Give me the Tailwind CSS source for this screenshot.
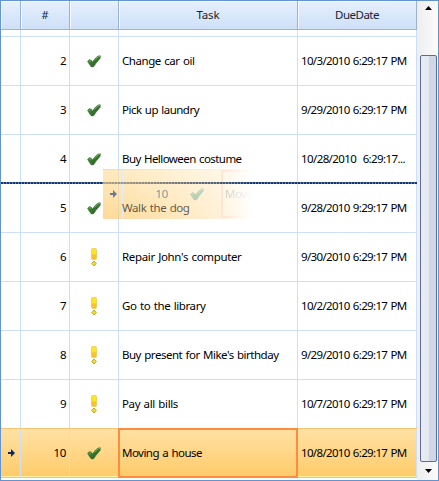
<!DOCTYPE html>
<html lang="en">
<head>
<meta charset="utf-8">
<title>Tasks</title>
<script src="https://cdn.jsdelivr.net/npm/@tailwindcss/browser@4"></script>
</head>
<body class="bg-white">
<svg class="absolute h-0 w-0">
  <defs>
    <linearGradient id="green" x1="0" y1="0" x2="1" y2="1"><stop offset="0" stop-color="#4fa040"/><stop offset=".5" stop-color="#38752f"/><stop offset="1" stop-color="#27562a"/></linearGradient>
    <linearGradient id="yellow" x1="0" y1="0" x2="0" y2="1"><stop offset="0" stop-color="#ffe51f"/><stop offset=".45" stop-color="#ffe51f"/><stop offset=".6" stop-color="#fbc12c"/><stop offset="1" stop-color="#fbc12c"/></linearGradient>
    <symbol id="check" viewBox="0 0 14 13"><path d="M.6 6.2 2.4 4.6 4.3 5.2 5.4 7.1 8.6 3 11.3 1 13.3.8 13.2 3.2 9 8.3 6.6 11.8 4.3 11.9 2.3 9.3Z" fill="url(#green)" stroke="#346a2f" stroke-width=".6"/><path d="M2 5.8 4 6.2M7.8 5 11.2 1.9 13 1.4" stroke="#63b64c" stroke-width="1" fill="none"/></symbol>
    <symbol id="bang" viewBox="0 0 6 19"><rect x=".5" y=".5" width="5" height="11" rx="1.2" fill="url(#yellow)" stroke="#e6cb62" stroke-width=".8"/><path d="M3 13 5.3 15.5 3 18 .7 15.5Z" fill="#f4df20" stroke="#b5a22c" stroke-width=".9" stroke-linejoin="round"/></symbol>
    <symbol id="arrow" viewBox="0 0 7 8"><path d="M0 3H3V0L7 4 3 8V5H0Z" fill="#10285c"/></symbol>
  </defs>
</svg>
<main class="relative flex h-[481px] w-[439px] overflow-hidden border border-[#6593cf] bg-white font-['Noto_Sans','Segoe_UI',sans-serif] text-[11.5px] leading-4 text-black">
  <section class="w-[416px] shrink-0">
    <header class="grid h-[29px] grid-cols-[20px_49px_49px_179px_119px] border-b border-[#9ab4d1] text-center text-[#152536]">
      <div class="border-r border-[#9ab4d1] bg-linear-to-b from-[#e7f0fd] via-[#d9e8fb] to-[#cfe0f7] shadow-[inset_1px_1px_0_#f5f9ff]"></div>
      <div class="border-r border-[#9ab4d1] bg-linear-to-b from-[#e7f0fd] via-[#d9e8fb] to-[#cfe0f7] pt-[6px] text-[11px] shadow-[inset_1px_1px_0_#f5f9ff]">#</div>
      <div class="border-r border-[#9ab4d1] bg-linear-to-b from-[#e7f0fd] via-[#d9e8fb] to-[#cfe0f7] shadow-[inset_1px_1px_0_#f5f9ff]"></div>
      <div class="border-r border-[#9ab4d1] bg-linear-to-b from-[#e7f0fd] via-[#d9e8fb] to-[#cfe0f7] pt-[6px] shadow-[inset_1px_1px_0_#f5f9ff]"><span class="fit" data-w="23">Task</span></div>
      <div class="border-r border-[#9ab4d1] bg-linear-to-b from-[#e7f0fd] via-[#d9e8fb] to-[#cfe0f7] pt-[6px] shadow-[inset_1px_1px_0_#f5f9ff]"><span class="fit" data-w="44">DueDate</span></div>
    </header>
    <div class="grid h-[7px] grid-cols-[20px_49px_49px_179px_119px] border-b border-[#cee0f8]">
      <i class="border-r border-[#cee0f8]"></i><i class="border-r border-[#cee0f8]"></i><i class="border-r border-[#cee0f8]"></i><i class="border-r border-[#cee0f8]"></i><i class="border-r border-[#cee0f8]"></i>
    </div>
    <div id="rows"></div>
  </section>
  <aside class="flex w-[21px] flex-col items-center bg-linear-to-r from-[#eeeeee] to-[#fbfbfb] pl-[2px]">
    <svg class="mt-[5px] h-[4px] w-[7px] shrink-0" viewBox="0 0 7 4"><path d="M0 4 3.5 0 7 4Z"/></svg>
    <div class="mt-[45px] h-[407px] w-[17px] shrink-0 rounded-[2px] border border-[#5c6b99] bg-linear-to-r from-[#e9edf4] from-0% via-[#e3e8f0] via-50% to-[#cfd6e5] to-55%"></div>
    <svg class="mt-[7px] h-[4px] w-[7px] shrink-0" viewBox="0 0 7 4"><path d="M0 0 3.5 4 7 0Z"/></svg>
  </aside>
  <!-- drop position marker -->
  <div class="absolute top-[181px] left-0 h-[2px] w-[416px] bg-[repeating-linear-gradient(90deg,#123672_0px,#123672_2px,#6483b2_2px,#6483b2_3px)]"></div>
  <!-- drag preview of the selected row -->
  <div class="absolute top-[168px] left-[102px] h-[50px] w-[152px] overflow-hidden opacity-65 [mask-image:linear-gradient(90deg,black_0%,rgba(0,0,0,.75)_35%,rgba(0,0,0,.4)_75%,transparent_98%)]">
    <div class="grid h-[50px] w-[316px] grid-cols-[20px_49px_49px_198px] border-y border-[#f8c373] bg-linear-to-b from-[#ffdf9b] to-[#ffc55d]">
      <div class="flex items-center justify-center border-r border-[#cee0f8] pl-px"><svg class="h-2 w-[7px]"><use href="#arrow"/></svg></div>
      <div class="flex items-center justify-end border-r border-[#cee0f8] pr-[3px]"><span class="fit" data-w="12.5">10</span></div>
      <div class="flex items-center justify-center"><svg class="h-[13px] w-[14px]"><use href="#check"/></svg></div>
      <div class="flex items-center border-2 border-[#ff8b3e] pl-[2px]"><span class="fit" data-w="80">Moving a house</span></div>
    </div>
  </div>
  <div class="absolute top-[199px] left-[121px]"><span class="fit text-black/65" data-w="67.5">Walk the dog</span></div>
</main>
<script>
const data=[
 [2,1,'Change car oil',72.5,'10/3/2010 6:29:17 PM',105.5],
 [3,1,'Pick up laundry',77,'9/29/2010 6:29:17 PM',105.5],
 [4,1,'Buy Helloween costume',119.5,'10/28/2010  6:29:17...',104],
 [5,1,'',0,'9/28/2010 9:29:17 PM',105.5],
 [6,0,"Repair John's computer",119.5,'9/30/2010 6:29:17 PM',105.5],
 [7,0,'Go to the library',83.5,'10/2/2010 6:29:17 PM',105.5],
 [8,0,"Buy present for Mike's birthday",156.5,'9/29/2010 6:29:17 PM',105.5],
 [9,0,'Pay all bills',56,'10/7/2010 6:29:17 PM',105.5],
 [10,1,'Moving a house',80,'10/8/2010 6:29:17 PM',105.5]];
document.getElementById('rows').innerHTML=data.map(([n,done,task,tw,due,dw])=>{
 const sel=n===10;
 return `<div class="grid grid-cols-[20px_49px_49px_179px_119px] ${sel?'relative h-[48px] bg-linear-to-b from-[#ffe1a3] to-[#ffcb69] shadow-[0_-1px_0_#f8c373,inset_0_-1px_0_#ffef9f,0_1px_0_#f8c373]':'h-[49px] border-b border-[#cee0f8]'}">
 <div class="flex items-center justify-center border-r border-[#cee0f8] pl-px">${sel?'<svg class="h-2 w-[7px]"><use href="#arrow"/></svg>':''}</div>
 <div class="flex items-center justify-end border-r border-[#cee0f8] pr-[3px] pb-px"><span class="fit" data-w="${n===10?12.5:6}">${n}</span></div>
 <div class="flex items-center justify-center border-r border-[#cee0f8] pt-px">${done?'<svg class="h-[13px] w-[14px]"><use href="#check"/></svg>':'<svg class="h-[19px] w-[6px]"><use href="#bang"/></svg>'}</div>
 <div class="relative flex items-center border-r border-[#cee0f8] pb-px pl-[3px]">${sel?'<i class="absolute -inset-x-px -top-px -bottom-px border-2 border-[#ff8b3e]"></i>':''}<span class="fit" data-w="${tw}">${task}</span></div>
 <div class="flex items-center border-r border-[#cee0f8] pb-px pl-[3px]"><span class="fit" data-w="${dw}">${due}</span></div>
 </div>`;}).join('');
/* letter spacing keeps every label at its intended width */
const ctx=document.createElement('canvas').getContext('2d');
ctx.font='11.5px "Noto Sans"';
document.querySelectorAll('.fit').forEach(s=>{
 s.style.whiteSpace='pre';
 const n=s.textContent.length, gaps=s.textContent.split(' ').length-1;
 s.style.wordSpacing='0.8px';
 if(n)s.style.letterSpacing=((+s.dataset.w-gaps*0.8-ctx.measureText(s.textContent).width)/n)+'px';
});
</script>
</body>
</html>
